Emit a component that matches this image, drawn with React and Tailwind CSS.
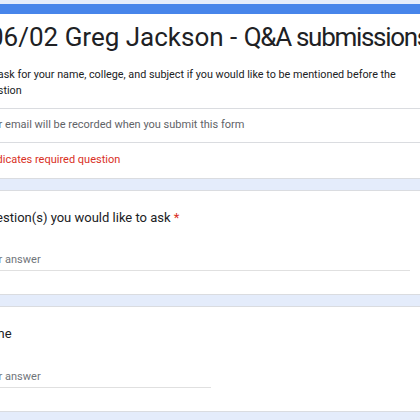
export default function App() {
  return (
    <div className="h-[420px] overflow-hidden bg-[#e4ecfb] pt-1" style={{ fontFamily: 'Roboto, "Liberation Sans", sans-serif' }}>
      <div className="w-[480px] ml-[-45px] flex flex-col gap-[11px]">
        {/* header card */}
        <div className="bg-white rounded-lg border border-[#dadce0] border-t-[10px] border-t-[#4785ea]">
          <div className="px-6 pt-[7px] pb-[9px]">
            <h1 className="ml-[9px] text-[26px] leading-[32px] text-[#202124] whitespace-nowrap">
              06/02 Greg Jackson - <span className="tracking-[-1.3px]">Q&amp;A submissions</span>
            </h1>
            <p className="mt-[14px] text-[10.8px] leading-[16px] text-[#202124] whitespace-nowrap">
              We ask for your name, college, and subject if you would like to be mentioned before the
              <br />
              question
            </p>
          </div>
          <div className="border-t border-[#dadce0] px-6 h-[34px] flex items-center text-[11px] text-[#5f6368]">
            Your email will be recorded when you submit this form
          </div>
          <div className="border-t border-[#dadce0] px-6 h-[36px] flex items-center text-[11px] text-[#d93025]">
            * Indicates required question
          </div>
        </div>

        {/* question card */}
        <div className="bg-white rounded-lg border border-[#dadce0] px-6 pt-[17px] h-[105px]">
          <div className="text-[13px] leading-[20px] text-[#202124]">
            Question(s) you would like to ask <span className="text-[#d93025]">*</span>
          </div>
          <div className="mt-[23px] border-b border-[#e0e0e0] pb-[1px] text-[11px] leading-[18px] text-[#70757a]">
            Your answer
          </div>
        </div>

        {/* name card */}
        <div className="bg-white rounded-lg border border-[#dadce0] px-6 pt-[17px] h-[106px]">
          <div className="ml-[-3px] text-[13px] leading-[20px] text-[#202124]">Name</div>
          <div className="mt-[24px] w-[231px] border-b border-[#e0e0e0] pb-[1px] text-[11px] leading-[18px] text-[#70757a]">
            Your answer
          </div>
        </div>
      </div>
    </div>
  );
}
